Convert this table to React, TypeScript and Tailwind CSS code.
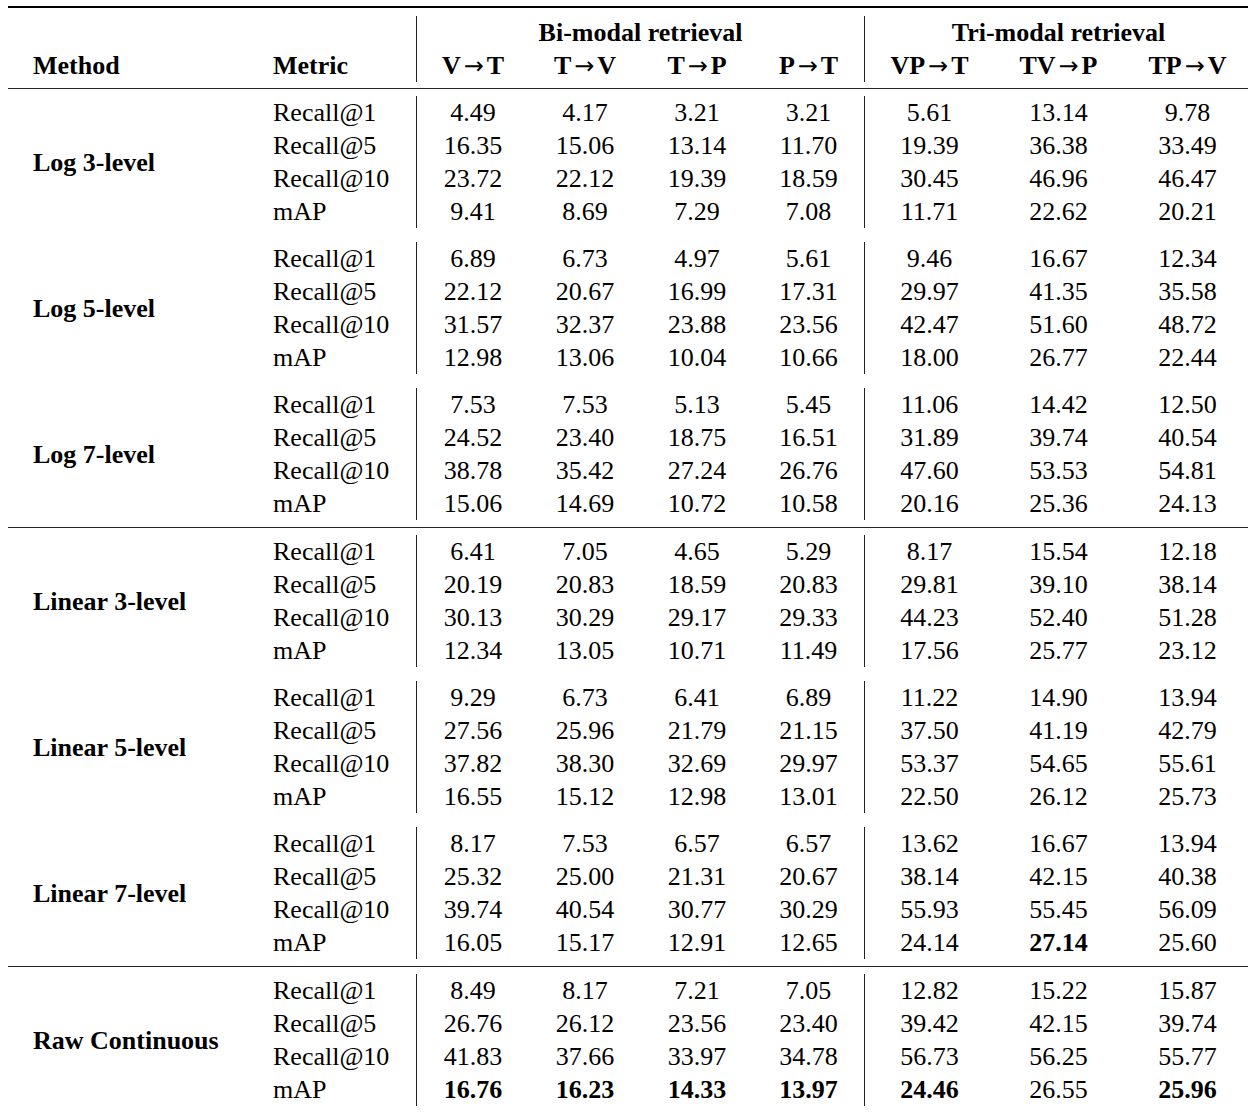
import React from "react";

type Cell = string | { v: string; b: true };
type Group = { method: string; rows: Cell[][] };

const B = (v: string): Cell => ({ v, b: true });

const metrics = ["Recall@1", "Recall@5", "Recall@10", "mAP"];

const sections: Group[][] = [
  [
    {
      method: "Log 3-level",
      rows: [
        ["4.49", "4.17", "3.21", "3.21", "5.61", "13.14", "9.78"],
        ["16.35", "15.06", "13.14", "11.70", "19.39", "36.38", "33.49"],
        ["23.72", "22.12", "19.39", "18.59", "30.45", "46.96", "46.47"],
        ["9.41", "8.69", "7.29", "7.08", "11.71", "22.62", "20.21"],
      ],
    },
    {
      method: "Log 5-level",
      rows: [
        ["6.89", "6.73", "4.97", "5.61", "9.46", "16.67", "12.34"],
        ["22.12", "20.67", "16.99", "17.31", "29.97", "41.35", "35.58"],
        ["31.57", "32.37", "23.88", "23.56", "42.47", "51.60", "48.72"],
        ["12.98", "13.06", "10.04", "10.66", "18.00", "26.77", "22.44"],
      ],
    },
    {
      method: "Log 7-level",
      rows: [
        ["7.53", "7.53", "5.13", "5.45", "11.06", "14.42", "12.50"],
        ["24.52", "23.40", "18.75", "16.51", "31.89", "39.74", "40.54"],
        ["38.78", "35.42", "27.24", "26.76", "47.60", "53.53", "54.81"],
        ["15.06", "14.69", "10.72", "10.58", "20.16", "25.36", "24.13"],
      ],
    },
  ],
  [
    {
      method: "Linear 3-level",
      rows: [
        ["6.41", "7.05", "4.65", "5.29", "8.17", "15.54", "12.18"],
        ["20.19", "20.83", "18.59", "20.83", "29.81", "39.10", "38.14"],
        ["30.13", "30.29", "29.17", "29.33", "44.23", "52.40", "51.28"],
        ["12.34", "13.05", "10.71", "11.49", "17.56", "25.77", "23.12"],
      ],
    },
    {
      method: "Linear 5-level",
      rows: [
        ["9.29", "6.73", "6.41", "6.89", "11.22", "14.90", "13.94"],
        ["27.56", "25.96", "21.79", "21.15", "37.50", "41.19", "42.79"],
        ["37.82", "38.30", "32.69", "29.97", "53.37", "54.65", "55.61"],
        ["16.55", "15.12", "12.98", "13.01", "22.50", "26.12", "25.73"],
      ],
    },
    {
      method: "Linear 7-level",
      rows: [
        ["8.17", "7.53", "6.57", "6.57", "13.62", "16.67", "13.94"],
        ["25.32", "25.00", "21.31", "20.67", "38.14", "42.15", "40.38"],
        ["39.74", "40.54", "30.77", "30.29", "55.93", "55.45", "56.09"],
        ["16.05", "15.17", "12.91", "12.65", "24.14", B("27.14"), "25.60"],
      ],
    },
  ],
  [
    {
      method: "Raw Continuous",
      rows: [
        ["8.49", "8.17", "7.21", "7.05", "12.82", "15.22", "15.87"],
        ["26.76", "26.12", "23.56", "23.40", "39.42", "42.15", "39.74"],
        ["41.83", "37.66", "33.97", "34.78", "56.73", "56.25", "55.77"],
        [B("16.76"), B("16.23"), B("14.33"), B("13.97"), B("24.46"), "26.55", B("25.96")],
      ],
    },
  ],
];

function Val({ c }: { c: Cell }) {
  if (typeof c === "string") return <div className="h-[33px] leading-[33px] text-center">{c}</div>;
  return <div className="h-[33px] leading-[33px] text-center font-bold">{c.v}</div>;
}

function Arrow({ a, b }: { a: string; b: string }) {
  return (
    <span className="font-bold whitespace-nowrap">
      {a}
      <span className="inline-block w-[26px] text-center font-normal font-['DejaVu_Sans',sans-serif] text-[24px]">→</span>
      {b}
    </span>
  );
}

export default function App() {
  return (
    <div className="w-[1248px] h-[1113px] overflow-hidden bg-white text-black text-[26px] font-['Liberation_Serif','Times_New_Roman',serif]">
      <div className="ml-[8px] w-[1244px]">
        <div className="mt-[6px] h-[2px] bg-black" />
        <div className="pt-[8px] flex">
          <div className="w-[240px] pl-[25px] pt-[33px] font-bold leading-[33px]">Method</div>
          <div className="w-[168px] pl-[25px] pt-[33px] font-bold leading-[33px]">Metric</div>
          <div className="w-[448px] border-l border-[#222]">
            <div className="h-[33px] leading-[33px] text-center font-bold">Bi-modal retrieval</div>
            <div className="grid grid-cols-[112px_112px_112px_111px] h-[33px] leading-[33px] text-center">
              <Arrow a="V" b="T" />
              <Arrow a="T" b="V" />
              <Arrow a="T" b="P" />
              <Arrow a="P" b="T" />
            </div>
          </div>
          <div className="w-[388px] border-l border-[#222]">
            <div className="h-[33px] leading-[33px] text-center font-bold">Tri-modal retrieval</div>
            <div className="grid grid-cols-[129px_129px_129px] h-[33px] leading-[33px] text-center">
              <Arrow a="VP" b="T" />
              <Arrow a="TV" b="P" />
              <Arrow a="TP" b="V" />
            </div>
          </div>
        </div>
        <div className="mt-[6px] h-px bg-[#222]" />
        {sections.map((sec, si) => (
          <div key={si}>
            {si > 0 && <div className="mt-[7px] h-px bg-[#222]" />}
            <div className="pt-[7px] flex flex-col gap-[14px]">
              {sec.map((g) => (
                <div key={g.method} className="flex">
                  <div className="w-[240px] pl-[25px] flex items-center font-bold">{g.method}</div>
                  <div className="w-[168px] pl-[25px]">
                    {metrics.map((m) => (
                      <div key={m} className="h-[33px] leading-[33px]">{m}</div>
                    ))}
                  </div>
                  <div className="w-[448px] border-l border-[#222] grid grid-cols-[112px_112px_112px_111px]">
                    {g.rows.map((r, i) => r.slice(0, 4).map((c, j) => <Val key={`${i}-${j}`} c={c} />))}
                  </div>
                  <div className="w-[388px] border-l border-[#222] grid grid-cols-[129px_129px_129px]">
                    {g.rows.map((r, i) => r.slice(4).map((c, j) => <Val key={`${i}-${j}`} c={c} />))}
                  </div>
                </div>
              ))}
            </div>
          </div>
        ))}
      </div>
    </div>
  );
}
